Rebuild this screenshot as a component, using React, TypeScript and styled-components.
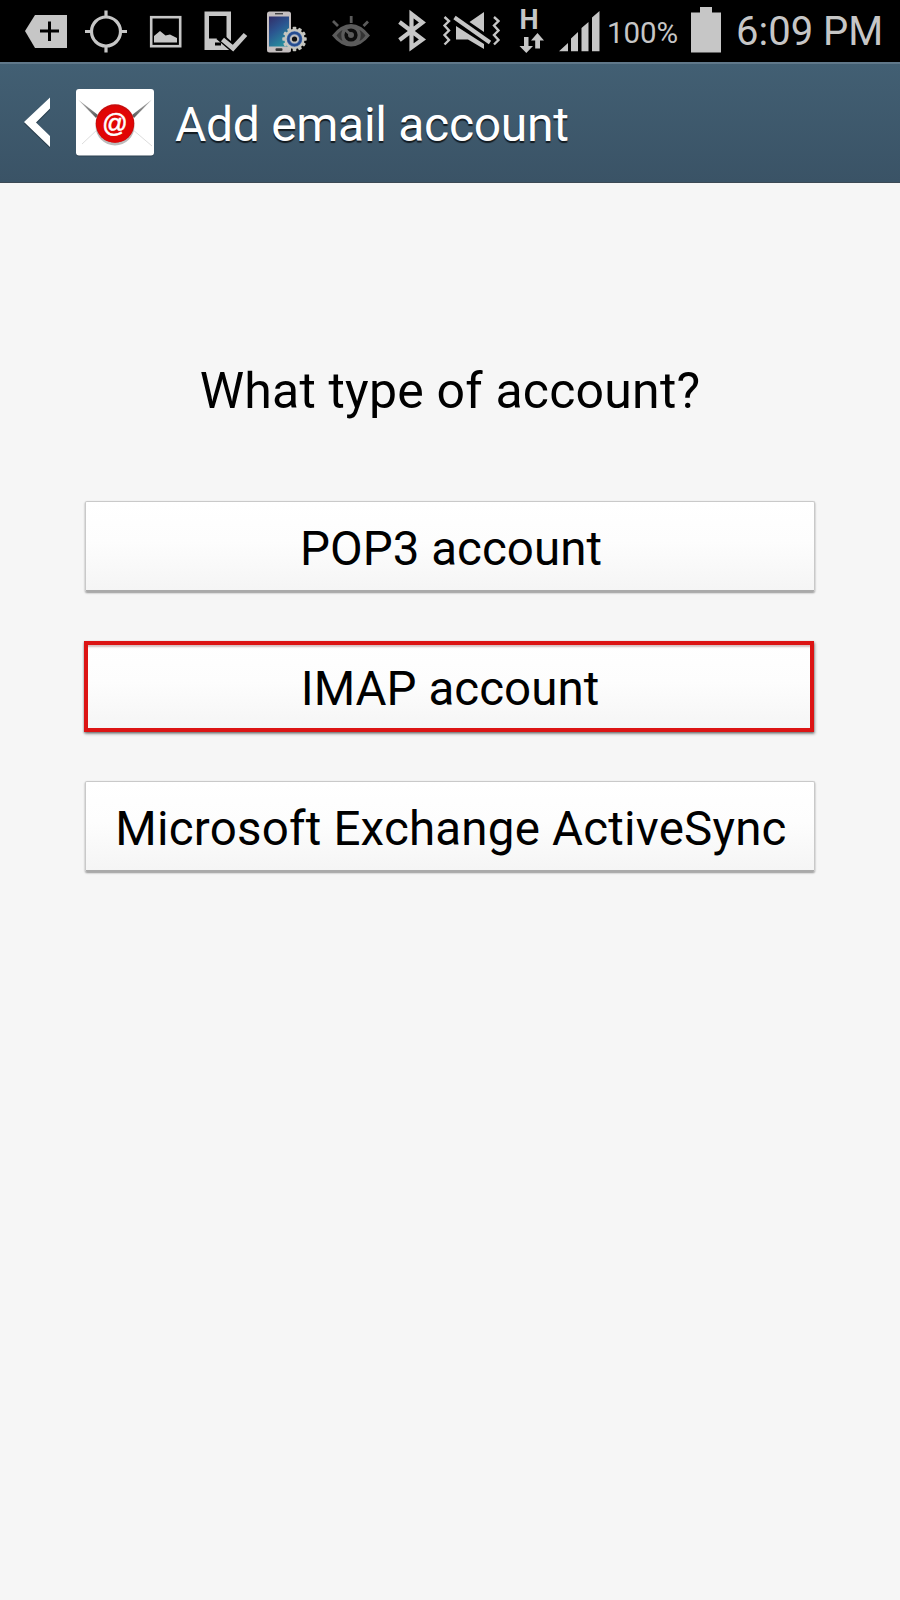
import React from "react";
import styled, { createGlobalStyle } from "styled-components";

const GlobalStyle = createGlobalStyle`
  * { box-sizing: border-box; }
  body { margin: 0; background: #f6f6f6; font-family: Roboto, "Liberation Sans", sans-serif; }
`;

const Screen = styled.div`
  width: 900px;
  height: 1600px;
  display: flex;
  flex-direction: column;
  overflow: hidden;
  background: #f6f6f6;
`;

const StatusBar = styled.div`
  display: flex;
  height: 62px;
  flex: none;
  background: #000;
  color: #c6c6c6;
  white-space: nowrap;
`;

const Glyph = styled.svg`
  display: block;
  flex: none;
  height: 62px;
`;

const BatteryLevel = styled.span`
  width: 81px;
  padding: 16px 0 0 4px;
  font-size: 29.5px;
  line-height: 34px;
  letter-spacing: -0.1px;
`;

const Clock = styled.span`
  padding: 8px 0 0 4px;
  font-size: 40px;
  line-height: 48px;
  letter-spacing: 0;
`;

const ActionBar = styled.header`
  display: flex;
  align-items: flex-start;
  height: 121px;
  flex: none;
  padding-left: 20px;
  background: linear-gradient(#425f73, #3a5366);
  border-top: 2px solid #60788a;
  border-bottom: 1px solid #3c4a55;
`;

const BackArrow = styled.svg`
  display: block;
  width: 34px;
  height: 54px;
  margin-top: 32px;
`;

const MailIcon = styled.svg`
  display: block;
  width: 82px;
  height: 72px;
  margin: 23px 0 0 20px;
`;

const Title = styled.h1`
  margin: 31px 0 0 19px;
  font-size: 48px;
  font-weight: 400;
  line-height: 60px;
  letter-spacing: -0.3px;
  color: #fff;
  text-shadow: 0 2px 1px rgba(0, 0, 0, 0.7);
  white-space: nowrap;
`;

const Content = styled.main`
  display: flex;
  flex-direction: column;
  align-items: center;
  padding-top: 178px;
`;

const Question = styled.h2`
  margin: 0 0 80px;
  font-size: 50px;
  font-weight: 400;
  line-height: 60px;
  letter-spacing: 0.2px;
  color: #000;
`;

const Choices = styled.div`
  display: flex;
  flex-direction: column;
  gap: 49px;
  width: 730px;
`;

const Choice = styled.button<{ $highlighted?: boolean; $tracking?: number }>`
  width: 730px;
  height: 91px;
  padding: 5px 0 0 2px;
  border: 1px solid #c9c9c9;
  border-bottom: 2px solid #aaa;
  border-radius: ${(p) => (p.$highlighted ? 0 : 2)}px;
  margin-left: ${(p) => (p.$highlighted ? -1 : 0)}px;
  background: linear-gradient(#fff, #fdfdfd 45%, #f5f5f5);
  box-shadow: 0 1px 2px rgba(0, 0, 0, 0.4)
    ${(p) => (p.$highlighted ? ", 1px 2px 3px rgba(0, 0, 0, 0.3), inset 0 5px 2px rgba(90, 0, 0, 0.25)" : "")};
  outline: ${(p) => (p.$highlighted ? "4px solid #dc1414" : "none")};
  outline-offset: -4px;
  font: 400 47.5px/56px Roboto, "Liberation Sans", sans-serif;
  letter-spacing: ${(p) => p.$tracking ?? 0.03}px;
  color: #000;
  white-space: nowrap;
`;

const INK = "#c6c6c6";

const gearTeeth = Array.from({ length: 12 }, (_, i) => i * 30);

function StatusIcons() {
  return (
    <>
      <Glyph width="76" viewBox="0 0 76 62">
        <path d="M25 31 35 15H67V48H35Z" fill={INK} />
        <path d="M40 31H59M49.5 21.5V41" stroke="#000" strokeWidth="3" />
      </Glyph>
      <Glyph width="60" viewBox="76 0 60 62" fill="none" stroke={INK} strokeWidth="3.2">
        <circle cx="106" cy="31.5" r="14.5" />
        <path d="M106 10.5V17M106 46V52.5M85 31.5H91.5M120.5 31.5H127" />
      </Glyph>
      <Glyph width="60" viewBox="136 0 60 62">
        <rect x="151.2" y="17.2" width="29" height="29" fill="none" stroke={INK} strokeWidth="2.6" />
        <path d="M154 42.5V36L160 31 165.5 35.5 170 34.5 177 38V42.5Z" fill={INK} />
      </Glyph>
      <Glyph width="60" viewBox="196 0 60 62">
        <path d="M204.5 11.5H231V50H204.5ZM209 16V38.5H226.5V16Z" fill={INK} fillRule="evenodd" />
        <rect x="215" y="42.5" width="6" height="3" fill="#000" />
        <path d="M222 38.5 233.5 48.5 246 34.5" fill="none" stroke="#000" strokeWidth="8" strokeLinecap="square" />
        <path d="M222.5 39.5 233 48.2 245.5 34.5" fill="none" stroke={INK} strokeWidth="4.8" />
      </Glyph>
      <Glyph width="66" viewBox="256 0 66 62">
        <defs>
          <linearGradient id="deviceScreen" x1="0" y1="0" x2="0.5" y2="1">
            <stop offset="0" stopColor="#322d68" />
            <stop offset="0.5" stopColor="#2b5590" />
            <stop offset="1" stopColor="#278a9d" />
          </linearGradient>
        </defs>
        <rect x="267" y="11.5" width="24" height="41" rx="2.5" fill="#c5bfc0" />
        <rect x="269" y="16.5" width="20" height="30" fill="url(#deviceScreen)" />
        <rect x="275" y="13" width="8" height="1.4" fill="#444" />
        <rect x="275.5" y="48.3" width="7" height="2.6" rx="1" fill="#333" />
        <g transform="translate(294.5 39)">
          {gearTeeth.map((a) => (
            <rect key={a} x="-1.8" y="-12.2" width="3.6" height="5" rx="0.8" fill="#c5c5bf" transform={`rotate(${a})`} />
          ))}
          <circle r="9" fill="#456dae" stroke="#c5c5bf" strokeWidth="2.4" />
          <circle r="6.2" fill="none" stroke="#254b8d" strokeWidth="2" />
          <circle r="3.6" fill="#111" stroke="#bbb" strokeWidth="2" />
        </g>
      </Glyph>
      <Glyph width="68" viewBox="322 0 68 62">
        <path d="M332 35.5Q341 24 351 24T370 35.5Q361 46.5 351 46.5T332 35.5Z" fill="#5b5b5b" />
        <path d="M336.5 35.5Q340 31 342.5 30Q340 35 342.5 41Q340 40 336.5 35.5M365.5 35.5Q362 31 359.5 30Q362 35 359.5 41Q362 40 365.5 35.5" fill="#333" />
        <circle cx="351" cy="35" r="6.6" fill="#0c0c0c" />
        <circle cx="351" cy="35" r="3" fill="#5b5b5b" />
        <path d="M345.5 30 351 35" stroke="#5b5b5b" strokeWidth="3" />
        <path d="M333 21 338 26M351.2 16V23M368 21.5 363.5 26" stroke="#5b5b5b" strokeWidth="2.8" />
      </Glyph>
      <Glyph width="46" viewBox="390 0 46 62" fill="none" stroke={INK} strokeWidth="4.2">
        <path d="M399.5 22 422.5 39.5 411.5 47.5V14L422.5 22.5 399.5 40" />
      </Glyph>
      <Glyph width="74" viewBox="436 0 74 62">
        <path d="M444.5 17 449 21 444.5 25.5 449 30.5 444.5 35 449 40 444.5 44.5M494 17 498.5 21 494 25.5 498.5 30.5 494 35 498.5 40 494 44.5" fill="none" stroke={INK} strokeWidth="2.4" />
        <path d="M469.5 22 484 12V32ZM456 26 484 44V49L468 39.5H456Z" fill={INK} />
        <path d="M454.5 17.5 490 42.5" stroke={INK} strokeWidth="4" />
      </Glyph>
      <Glyph width="43" viewBox="510 0 43 62" fill={INK}>
        <text x="519.5" y="29" fontFamily="Roboto, sans-serif" fontSize="27" fontWeight="700">H</text>
        <path d="M524 37H528.5V46H533L526.3 53 519.5 46H524ZM535.2 48.5V40.5H531L537.5 33 544 40.5H540V48.5Z" />
      </Glyph>
      <Glyph width="50" viewBox="553 0 50 62" fill={INK}>
        <path d="M559 51.3 568 43V51.3ZM571 51.3V38.5L578 32V51.3ZM581.5 51.3V28L588.5 22V51.3ZM592 51.3V17.5L599.5 11V51.3Z" />
      </Glyph>
    </>
  );
}

export default function App() {
  return (
    <Screen>
      <GlobalStyle />
      <StatusBar>
        <StatusIcons />
        <BatteryLevel>100%</BatteryLevel>
        <Glyph width="48" viewBox="684 0 48 62" fill={INK}>
          <path d="M700 7H712V12.5H721V52.5H691V12.5H700Z" />
        </Glyph>
        <Clock>6:09 PM</Clock>
      </StatusBar>
      <ActionBar>
        <BackArrow viewBox="20 96 34 54">
          <path d="M24 123.5 50 99.5V110L36.5 123.5 50 137V148.5Z" fill="#1e2f3c" opacity=".6" />
          <path d="M24 122 50 97.5V108.5L36 122.5 50 136V147Z" fill="#fff" />
        </BackArrow>
        <MailIcon viewBox="74 87 82 72">
          <defs>
            <linearGradient id="foldLeft" x1="0" y1="0" x2="1" y2="1">
              <stop offset="0" stopColor="#bbb" />
              <stop offset="1" stopColor="#555" />
            </linearGradient>
            <linearGradient id="foldRight" x1="1" y1="0" x2="0" y2="1">
              <stop offset="0" stopColor="#bbb" />
              <stop offset="1" stopColor="#555" />
            </linearGradient>
          </defs>
          <rect x="76" y="90" width="78" height="66.5" rx="3" fill="#263947" opacity=".7" />
          <rect x="76" y="89" width="78" height="66.5" rx="3" fill="#fff" />
          <path d="M78 99.5 98 115 96 118Z" fill="url(#foldLeft)" />
          <path d="M152 99.5 132 115 134 118Z" fill="url(#foldRight)" />
          <path d="M82 144 98 129M152 146 132 129" stroke="#ddd" strokeWidth="1" />
          <circle cx="115" cy="126" r="19.5" fill="#bcbcbc" />
          <circle cx="115" cy="123.5" r="19.3" fill="#c70d0d" />
          <circle cx="115" cy="124.3" r="18.3" fill="#e10505" />
          <text x="115" y="131.5" textAnchor="middle" fontFamily="Liberation Sans, Arial, sans-serif" fontSize="25" fill="#fff" stroke="#fff" strokeWidth="0.6">@</text>
        </MailIcon>
        <Title>Add email account</Title>
      </ActionBar>
      <Content>
        <Question>What type of account?</Question>
        <Choices>
          <Choice>POP3 account</Choice>
          <Choice $highlighted>IMAP account</Choice>
          <Choice $tracking={0.2}>Microsoft Exchange ActiveSync</Choice>
        </Choices>
      </Content>
    </Screen>
  );
}
